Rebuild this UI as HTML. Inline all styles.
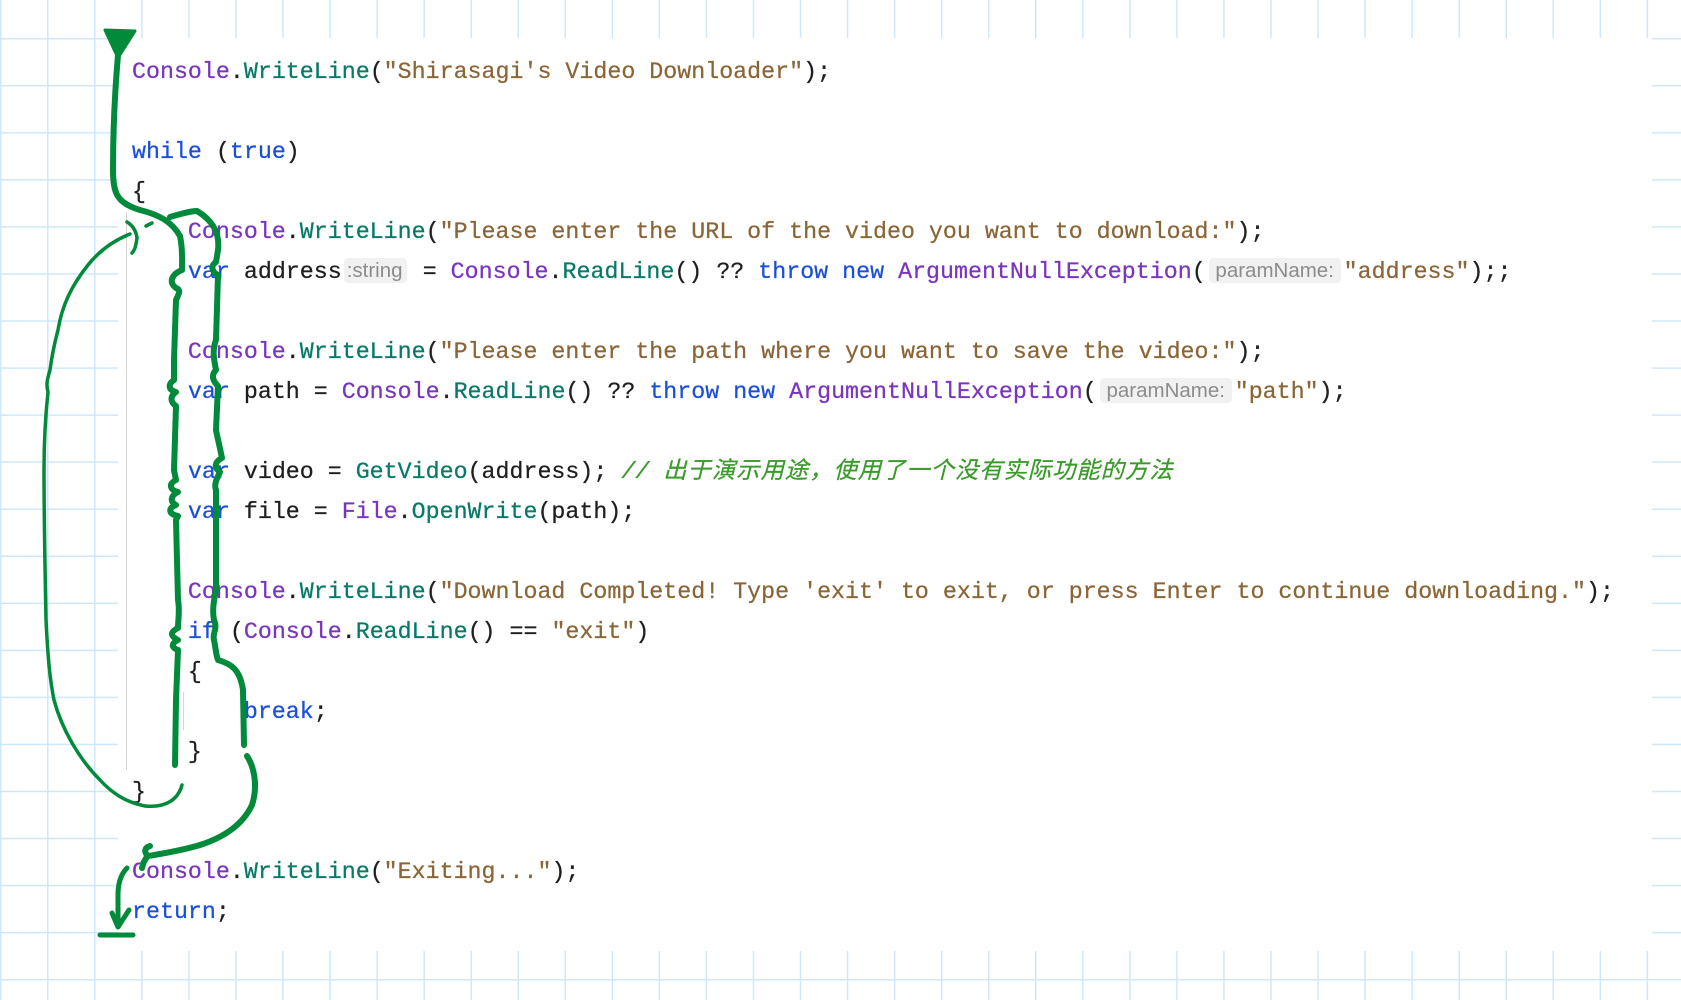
<!DOCTYPE html>
<html><head><meta charset="utf-8"><style>
html,body{margin:0;padding:0}
body{width:1681px;height:1000px;position:relative;overflow:hidden;background-color:#fff;
background-image:linear-gradient(to right,#cde8fa 0,#cde8fa 1.5px,transparent 1.5px),linear-gradient(to bottom,#cde8fa 0,#cde8fa 1.5px,transparent 1.5px);
background-size:47.05px 47.05px;background-position:0 0,0 38px;}
#panel{position:absolute;left:118px;top:38px;width:1534px;height:913px;background:#fff}
#code{position:absolute;left:132px;top:52px;font-family:"Liberation Mono",monospace;font-size:23.3px;line-height:40px;white-space:pre;color:#1f1f1f;-webkit-text-stroke:0.25px currentColor}
.c{color:#7a35c0}.m{color:#067a68}.s{color:#8a6536}.k{color:#1a4fdb}
.cm{color:#3a9a2a;font-style:italic;font-family:"Liberation Mono","Noto Sans CJK SC",monospace}
.cj{letter-spacing:1px}
.h{display:inline-block;font-family:"Liberation Sans",sans-serif;font-size:20.5px;line-height:25px;color:#8c8c8c;background:#f1f1f1;border-radius:4px;padding:0 3px;vertical-align:1px;margin:0 3px;-webkit-text-stroke:0;box-sizing:border-box}
.p{width:132px;text-align:center}
.g{position:absolute;width:1px;background:#d4d4d4}
</style></head><body>
<div id="panel"></div>
<div class="g" style="left:126px;top:212px;height:558px"></div>
<div class="g" style="left:183px;top:692px;height:38px"></div>
<div id="code"><span class="c">Console</span>.<span class="m">WriteLine</span>(<span class="s">"Shirasagi's Video Downloader"</span>);

<span class="k">while</span> (<span class="k">true</span>)
{
    <span class="c">Console</span>.<span class="m">WriteLine</span>(<span class="s">"Please enter the URL of the video you want to download:"</span>);
    <span class="k">var</span> address<span class="h" style="width:63px;margin:0 2px">:string</span> = <span class="c">Console</span>.<span class="m">ReadLine</span>() ?? <span class="k">throw</span> <span class="k">new</span> <span class="c">ArgumentNullException</span>(<span class="h p">paramName:</span><span class="s">"address"</span>);;

    <span class="c">Console</span>.<span class="m">WriteLine</span>(<span class="s">"Please enter the path where you want to save the video:"</span>);
    <span class="k">var</span> path = <span class="c">Console</span>.<span class="m">ReadLine</span>() ?? <span class="k">throw</span> <span class="k">new</span> <span class="c">ArgumentNullException</span>(<span class="h p">paramName:</span><span class="s">"path"</span>);

    <span class="k">var</span> video = <span class="m">GetVideo</span>(address); <span class="cm">// <span class="cj">出于演示用途，使用了一个没有实际功能的方法</span></span>
    <span class="k">var</span> file = <span class="c">File</span>.<span class="m">OpenWrite</span>(path);

    <span class="c">Console</span>.<span class="m">WriteLine</span>(<span class="s">"Download Completed! Type 'exit' to exit, or press Enter to continue downloading."</span>);
    <span class="k">if</span> (<span class="c">Console</span>.<span class="m">ReadLine</span>() == <span class="s">"exit"</span>)
    {
        <span class="k">break</span>;
    }
}

<span class="c">Console</span>.<span class="m">WriteLine</span>(<span class="s">"Exiting..."</span>);
<span class="k">return</span>;</div>
<svg width="1681" height="1000" style="position:absolute;left:0;top:0" fill="none" stroke="#008a3a" stroke-linecap="round" stroke-linejoin="round">
<path d="M105 30 L135 31 L118 58 Z" fill="#008a3a" stroke-width="3"/>
<path stroke-width="6" d="M118 55 C115 90 113 130 113 170 C113 195 118 203 140 210 C160 215 172 222 180 236 C183 250 182 262 182 270 C172 274 168 282 176 288 C182 290 178 295 176 300 L174 360 L174 380 C168 384 168 390 176 392 C170 396 170 402 176 406 L174 470 L176 480 C168 484 170 490 178 492 C170 496 170 502 176 505 C168 508 168 514 178 516 L176 520 L178 600 C180 610 178 620 178 628 C170 632 170 636 178 640 C170 644 172 648 178 650 L176 700 L175 765"/>
<path stroke-width="6" d="M170 217 C180 214 190 211 197 211 C212 220 220 232 218 250 L216 262 C210 266 212 272 218 275 L216 340 C212 350 214 360 216 370 C210 376 214 382 218 386 L216 430 C218 440 220 448 222 458 C214 462 214 468 220 472 C216 480 214 485 216 490 L216 590 C214 600 212 610 214 620 C218 628 212 634 214 640 C216 650 216 655 218 660 C232 664 240 670 243 690 L244 745"/>
<path stroke-width="6" d="M247 756 C256 770 257 790 252 805 C244 822 228 836 200 845 C180 851 160 854 148 856 C144 852 144 848 150 846 M148 856 C144 860 143 864 142 868"/>
<path stroke-width="5" d="M127 868 C120 875 118 885 118 895 L118 925 M112 913 L118 927 L129 910 M100 935 L133 935"/>
<path stroke-width="3.5" d="M130 234 C115 240 100 250 88 265 C72 285 62 305 58 330 C54 345 52 355 50 370 C47 380 46 385 48 392 C45 420 44 440 44 470 C44 520 45 570 46 620 C48 660 50 680 54 700 C62 730 80 760 100 780 C112 793 125 802 145 806 C165 808 178 800 182 785"/>
<path stroke-width="3.5" d="M127 222 C132 225 136 230 137 238 C136 245 135 250 132 253 M146 226 L152 223"/>
</svg>
</body></html>
